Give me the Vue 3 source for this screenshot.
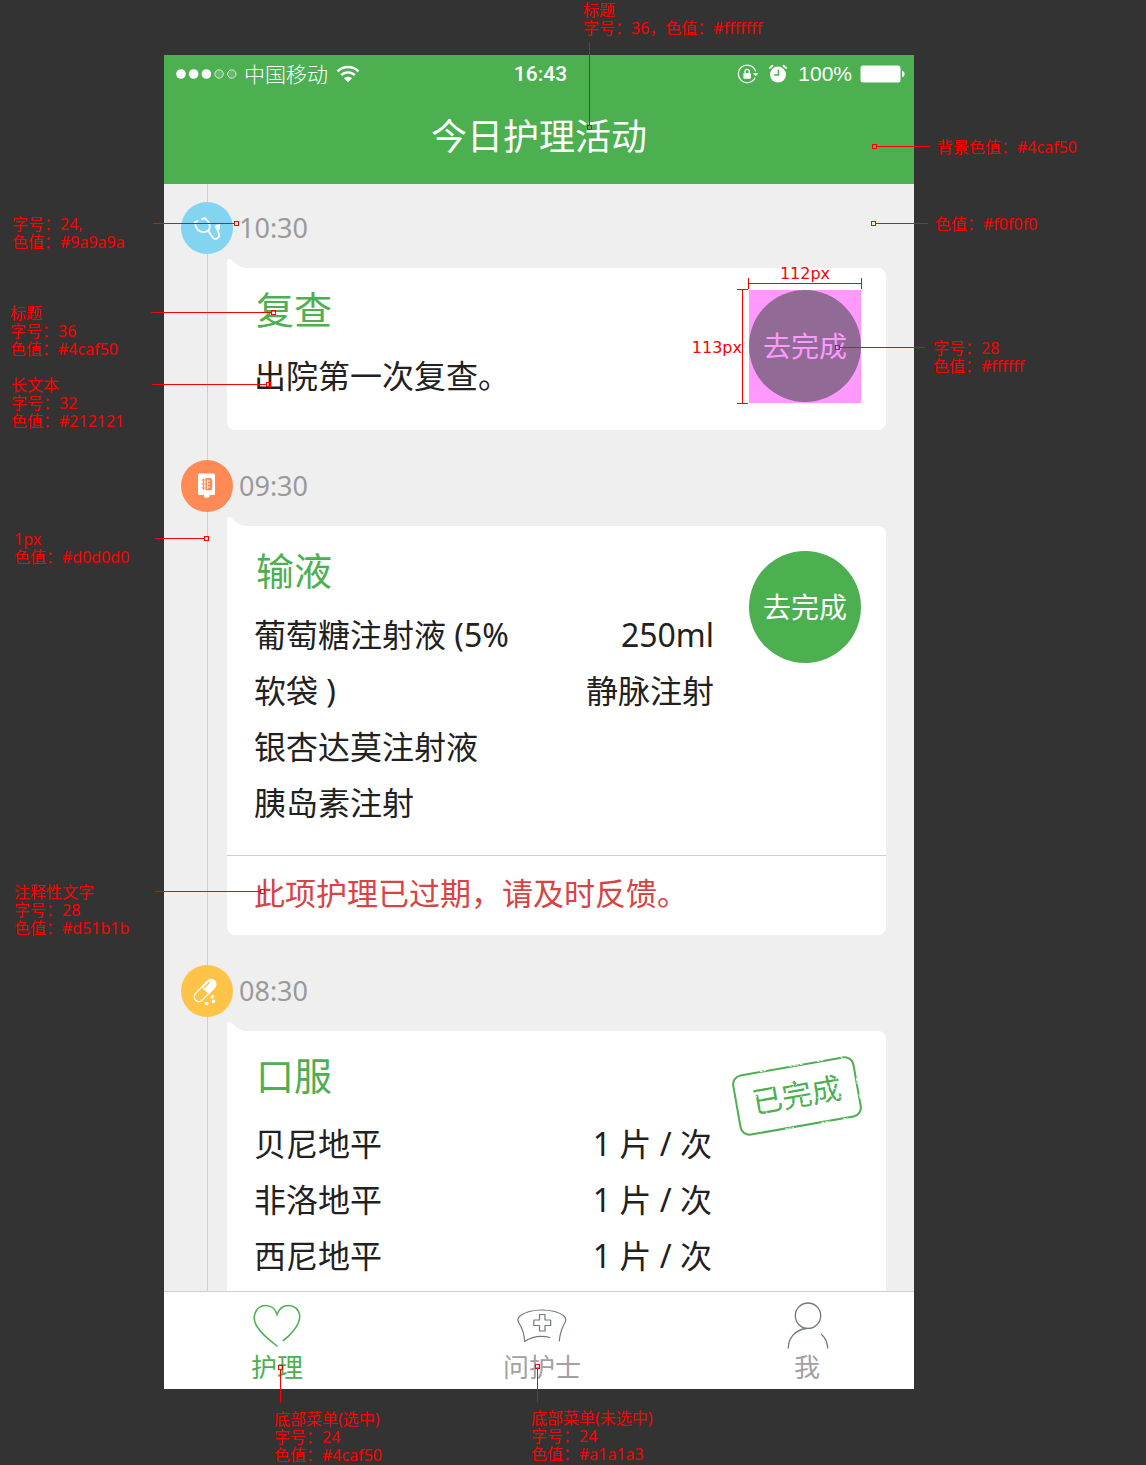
<script setup>
import { ref } from 'vue'

const activeTab = ref('care')

const tabs = [
  { id: 'care', label: '护理' },
  { id: 'nurse', label: '问护士' },
  { id: 'me', label: '我' },
]

const doses = [
  { name: '贝尼地平', dose: '1 片 / 次' },
  { name: '非洛地平', dose: '1 片 / 次' },
  { name: '西尼地平', dose: '1 片 / 次' },
]

// Spec notes, grouped by the edge of the phone they are anchored to.
// text: label position, line: leader [x, y, width, height], mark: target centre.
const noteGroups = [
  {
    anchor: 'start',
    notes: [
      { text: [-152, 160], lines: ['字号：24,', '色值：#9a9a9a'], line: [-11, 168, 81, 1], mark: [72, 168] },
      { text: [-154, 249], lines: ['标题', '字号：36', '色值：#4caf50'], line: [-13, 257, 120, 1], mark: [109, 257] },
      { text: [-153, 321], lines: ['长文本', '字号：32', '色值：#212121'], line: [-12, 329, 114, 1], mark: [104, 329] },
      { text: [-150, 475], lines: ['1px', '色值：#d0d0d0'], line: [-9, 483, 49, 1], mark: [42, 483] },
      { text: [-150, 828], lines: ['注释性文字', '字号：28', '色值：#d51b1b'], line: [-9, 836, 105, 1], mark: [98, 836] },
      { text: [110, 1355], lines: ['底部菜单(选中)', '字号：24', '色值：#4caf50'], line: [116, 1315, 1, 33], mark: [116, 1312] },
    ],
  },
  {
    anchor: 'middle',
    notes: [
      { text: [44, -54], lines: ['标题', '字号：36，色值：#fffffff'], line: [50, -13, 1, 83], mark: [50, 72] },
      { text: [-8, 1354], lines: ['底部菜单(未选中)', '字号：24', '色值：#a1a1a3'], line: [-2, 1314, 1, 33], mark: [-2, 1311] },
    ],
  },
  {
    anchor: 'end',
    notes: [
      { text: [23, 83], lines: ['背景色值：#4caf50'], line: [-38, 91, 54, 1], mark: [-40, 91] },
      { text: [21, 160], lines: ['色值：#f0f0f0'], line: [-39, 168, 53, 1], mark: [-41, 168] },
      { text: [19, 284], lines: ['字号：28', '色值：#ffffff'], line: [-75, 292, 86, 1], mark: [-77, 292] },
    ],
  },
]

const at = ([x, y]) => ({ left: `${x}px`, top: `${y}px` })
const box = ([x, y, w, h]) => ({ left: `${x}px`, top: `${y}px`, width: `${w}px`, height: `${h}px` })
const centred = ([x, y]) => at([x - 2, y - 2])
</script>

<template>
  <div class="board">
    <main class="phone">
      <header class="header">
        <div class="status">
          <div class="status-left">
            <svg class="signal" viewBox="0 0 62 12" aria-hidden="true">
              <g fill="#fff">
                <circle cx="5" cy="6" r="4.8" />
                <circle cx="17.7" cy="6" r="4.8" />
                <circle cx="30.4" cy="6" r="4.8" />
              </g>
              <g fill="#fff" fill-opacity=".15" stroke="#fff" stroke-opacity=".75">
                <circle cx="43.1" cy="6" r="4.2" />
                <circle cx="55.8" cy="6" r="4.2" />
              </g>
            </svg>
            <span class="carrier">中国移动</span>
            <svg class="wifi" viewBox="0 0 24 18" aria-hidden="true">
              <g fill="none" stroke="#fff" stroke-width="2.4">
                <path d="M1.5 6.4C7.2.5 16.8.5 22.5 6.4" />
                <path d="M5.2 10.2C9 6.4 15 6.4 18.8 10.2" />
              </g>
              <path d="M12 17.2L8 13.2C10.3 11.2 13.7 11.2 16 13.2Z" fill="#fff" />
            </svg>
          </div>
          <time class="clock">16:43</time>
          <div class="status-right">
            <svg class="lock" viewBox="0 0 22 20" aria-hidden="true">
              <path d="M18.2 13.5A8.8 8.8 0 1 1 18.600 7.400" fill="none" stroke="#fff" stroke-width="1.2" />
              <path d="M16 9.2H21.500L18.800 12.200Z" fill="#fff" />
              <rect x="6.4" y="9" width="7.400" height="5.800" rx=".8" fill="#fff" />
              <path d="M8 9V7.4A2.1 2.1 0 0 1 12.200 7.400V9" fill="none" stroke="#fff" stroke-width="1.3" />
            </svg>
            <svg class="alarm" viewBox="0 0 20 20" aria-hidden="true">
              <circle cx="10" cy="10.600" r="8" fill="#fff" />
              <path d="M1.800 4L4.500 1.800M18.200 4L15.500 1.800" stroke="#fff" stroke-width="1.800" stroke-linecap="round" />
              <path d="M10.400 5.800V11H6.200" fill="none" stroke="#4caf50" stroke-width="1.500" />
            </svg>
            <span class="percent">100%</span>
            <svg class="battery" viewBox="0 0 45 18" aria-hidden="true">
              <rect x=".5" y=".5" width="40" height="17" rx="2.500" fill="#fff" />
              <path d="M42 5.800C45.500 6.500 45.500 11.500 42 12.200Z" fill="#fff" />
            </svg>
          </div>
        </div>
        <h1 class="heading">今日护理活动</h1>
      </header>

      <section class="timeline">
        <article class="entry">
          <div class="entry-head">
            <span class="badge badge-blue">
              <svg viewBox="0 0 52 52" aria-hidden="true">
                <g fill="none" stroke="#fff" stroke-width="1.800" stroke-linecap="round" stroke-linejoin="round">
                  <path d="M16.600 19.200L14 20.200C14.300 26.500 18 30.300 22.800 30.300C27 30.300 29.500 27 28.600 23C27.800 20 25.800 17.500 23.700 16L21 17.200" />
                  <path d="M27.200 28.800L31 34.500C32.500 36.800 34 37.600 35.500 36.800L37.600 35.400C39.800 33.400 37 30.500 36.200 27" />
                </g>
                <circle cx="36.400" cy="24.800" r="2.300" fill="#fff" />
                <path d="M38.200 22V27.500" stroke="#fff" stroke-width="1.300" />
              </svg>
            </span>
            <time class="time">10:30</time>
          </div>
          <div class="card">
            <svg class="ear" viewBox="0 0 22 10" aria-hidden="true"><path d="M0 10V2C0-.3 3-.7 5 1.400C10 6.500 15 9 22 9V10Z" fill="#fff" /></svg>
            <div class="card-body card-body-short">
              <div class="content">
                <h2 class="title">复查</h2>
                <p class="summary">出院第一次复查。</p>
              </div>
              <div class="action action-measured">
                <button type="button" class="go">去完成</button>
                <span class="measure measure-width">112px</span>
                <span class="ruler ruler-width"></span>
                <span class="measure measure-height">113px</span>
                <span class="ruler ruler-height"></span>
              </div>
            </div>
          </div>
        </article>

        <article class="entry">
          <div class="entry-head">
            <span class="badge badge-orange">
              <svg viewBox="0 0 52 52" aria-hidden="true">
                <path d="M18.500 13.500H32.500Q34 13.500 34 15V33.500Q34 35 32.500 35H28.500V36.500Q28 37.800 25.700 37.800Q23.500 37.800 23 36.500V35H18.500Q17 35 17 33.500V15Q17 13.500 18.500 13.500Z" fill="#fff" />
                <path d="M24.500 18H29Q31.200 18 31.200 20V28Q31.200 30.200 29 30.200H24.500" fill="#ff8a55" />
                <path d="M26 21H29M26 24H29M26 27H29M26.500 19.500V29" stroke="#fff" stroke-width=".9" />
                <path d="M20.500 20H24.500M20.500 24H24.500M20.500 28H24.500M22.500 18.500V30" stroke="#ff8a55" stroke-width="1.200" />
              </svg>
            </span>
            <time class="time">09:30</time>
          </div>
          <div class="card">
            <svg class="ear" viewBox="0 0 22 10" aria-hidden="true"><path d="M0 10V2C0-.3 3-.7 5 1.400C10 6.500 15 9 22 9V10Z" fill="#fff" /></svg>
            <div class="card-body">
              <div class="content">
                <h2 class="title">输液</h2>
                <div class="infusion">
                  <ul>
                    <li>葡萄糖注射液 (5%<br />软袋 )</li>
                    <li>银杏达莫注射液</li>
                    <li>胰岛素注射</li>
                  </ul>
                  <p class="usage">250ml<br />静脉注射</p>
                </div>
              </div>
              <div class="action">
                <button type="button" class="go">去完成</button>
              </div>
            </div>
            <p class="overdue">此项护理已过期，请及时反馈。</p>
          </div>
        </article>

        <article class="entry">
          <div class="entry-head">
            <span class="badge badge-yellow">
              <svg viewBox="0 0 52 52" aria-hidden="true">
                <g transform="rotate(-46 24 25.500)">
                  <rect x="10.500" y="20.800" width="27" height="9.400" rx="4.700" fill="none" stroke="#fff" stroke-width="1.300" />
                  <path d="M24 20.200H32.500A5.300 5.300 0 0 1 32.500 30.800H24Z" fill="#fff" />
                  <path d="M25.500 23H33" stroke="#ffc348" stroke-width="1.300" stroke-linecap="round" />
                </g>
                <g fill="#fff">
                  <circle cx="31.300" cy="31.700" r="1.700" />
                  <circle cx="32.500" cy="36.400" r="1.800" />
                  <circle cx="25.700" cy="38.600" r="1.800" />
                </g>
              </svg>
            </span>
            <time class="time">08:30</time>
          </div>
          <div class="card card-open">
            <svg class="ear" viewBox="0 0 22 10" aria-hidden="true"><path d="M0 10V2C0-.3 3-.7 5 1.400C10 6.500 15 9 22 9V10Z" fill="#fff" /></svg>
            <div class="card-body card-body-open">
              <div class="content">
                <h2 class="title">口服</h2>
                <table class="doses">
                  <tbody>
                    <tr v-for="item in doses" :key="item.name">
                      <th scope="row">{{ item.name }}</th>
                      <td>{{ item.dose }}</td>
                    </tr>
                  </tbody>
                </table>
              </div>
              <div class="action">
                <div class="stamp">
                  已完成
                  <svg class="scratches" viewBox="0 0 124 62" aria-hidden="true">
                    <g fill="none" stroke="#fff" stroke-linecap="round">
                      <path d="M30 .5H37M60 .5H74M88 .5H94M112 1L120 6M123.500 24V30M123.500 40V44M45 61.500H53M82 61.500H90M104 61.500H108" stroke-width="1" stroke-dasharray="2 1.600" />
                      <path d="M18 26L40 19M20 39L44 31M49 24L72 17M48 36L73 41M53 45L71 27M80 22L105 32M79 38L104 21M83 45L106 39M24 20L30 45M90 16L98 44" stroke-width=".9" stroke-dasharray="1 2.600" />
                    </g>
                  </svg>
                </div>
              </div>
            </div>
          </div>
        </article>
      </section>

      <nav class="tabbar">
        <button
          v-for="tab in tabs"
          :key="tab.id"
          type="button"
          class="tab"
          :class="{ 'tab-active': tab.id === activeTab }"
          @click="activeTab = tab.id"
        >
          <svg viewBox="0 0 52 52" fill="none" stroke-linecap="round" aria-hidden="true">
            <path
              v-if="tab.id === 'care'"
              stroke-width="1.500"
              d="M26 46C18 40 10 33 6 26.500C3 22 2.800 17 4 13.500C6 8 10 5.500 14.500 5.500C20 5.500 24.500 9 26 14.500C28 9 32 5.500 37.500 5.500C43 5.500 48 9 48.700 15.500C49 20.500 47 25 43 30C39.500 34.500 36 38 32.300 40.700"
            />
            <g v-else-if="tab.id === 'nurse'" stroke-width="1.200">
              <path d="M34 37.500C26 35.500 16 36.500 8.700 41.500C8.300 33 6.500 28.500 2.700 22.500C1.500 20 2 17.500 4 16C14 8 38 8 48 16C50.200 18 50.300 20 49 22.500C45.500 28.500 44 32 43.300 41" />
              <path d="M23.500 14.500H29V20H34.700V25.500H29V31H23.500V25.500H17.800V20H23.500Z" stroke-linejoin="round" />
            </g>
            <g v-else stroke-width="1.300">
              <circle cx="27" cy="15.700" r="12.700" />
              <path d="M25 28.500C14 30 7.300 38 7.300 48M40.500 34.500C44.500 38 46.500 43 46.700 48" />
            </g>
          </svg>
          <span>{{ tab.label }}</span>
        </button>
      </nav>

      <aside v-for="group in noteGroups" :key="group.anchor" class="notes" :class="`notes-${group.anchor}`">
        <template v-for="note in group.notes" :key="note.text.join()">
          <p class="note" :style="at(note.text)">
            <span v-for="line in note.lines" :key="line">{{ line }}</span>
          </p>
          <i class="leader" :style="box(note.line)"></i>
          <i class="mark" :style="centred(note.mark)"></i>
        </template>
      </aside>
    </main>
  </div>
</template>

<style>
body {
  margin: 0;
  background: #333;
}
</style>

<style scoped>
.board {
  display: grid;
  grid-template-columns: 164px minmax(0, 1fr) 232px;
  padding: 55px 0 76px;
  overflow: hidden;
  background: #333;
  font-family: "Noto Sans", "Noto Sans CJK SC", sans-serif;
  font-weight: 400;
}

.phone {
  grid-column: 2;
  position: relative;
  color: #212121;
}

h1,
h2,
p,
ul {
  margin: 0;
  padding: 0;
  font-weight: inherit;
}

ul {
  list-style: none;
}

svg {
  display: block;
  flex: none;
}

button {
  padding: 0;
  border: 0;
  background: none;
  font: inherit;
  cursor: pointer;
}

/* Header */
.header {
  height: 129px;
  background: #4caf50;
  color: #fff;
}

.status {
  display: grid;
  grid-template-columns: 1fr auto 1fr;
  align-items: center;
  height: 38px;
  padding: 0 9px 0 12px;
}

.status-left,
.status-right {
  display: flex;
  align-items: center;
}

.status-right {
  justify-content: flex-end;
}

.signal {
  width: 62px;
  height: 12px;
}

.carrier {
  margin: 0 8px 0 6px;
  font-size: 21px;
  font-weight: 300;
  line-height: 38px;
}

.wifi {
  width: 24px;
  height: 18px;
}

.clock {
  font-family: Roboto, sans-serif;
  font-size: 21px;
  font-weight: 500;
}

.lock {
  width: 22px;
  height: 20px;
  margin-right: 9px;
}

.alarm {
  width: 20px;
  height: 20px;
  margin-right: 10px;
}

.percent {
  margin-right: 8px;
  font-family: "Liberation Sans", sans-serif;
  font-size: 21px;
}

.battery {
  width: 45px;
  height: 18px;
}

.heading {
  padding-top: 16px;
  font-size: 36px;
  line-height: 56px;
  text-align: center;
}

/* Timeline */
.timeline {
  display: flex;
  flex-direction: column;
  gap: 30px;
  padding: 18px 28px 0 17px;
  background: linear-gradient(#cfcfcf, #cfcfcf) 43px 0 / 1px 100% no-repeat #efefef;
}

.entry-head {
  display: flex;
  align-items: center;
  gap: 6px;
  margin-bottom: 14px;
}

.badge {
  width: 52px;
  height: 52px;
  border-radius: 50%;
}

.badge-blue {
  background: #82d4f0;
}

.badge-orange {
  background: #ff8a55;
}

.badge-yellow {
  background: #ffc348;
}

.time {
  color: #9a9a9a;
  font-size: 27px;
  line-height: 50px;
}

.card {
  position: relative;
  margin-left: 46px;
  border-radius: 0 8px 8px 8px;
  background: #fff;
}

.card-open {
  border-radius: 0 8px 0 0;
}

.ear {
  position: absolute;
  left: 0;
  top: -9px;
  width: 22px;
  height: 10px;
}

.card-body {
  display: flex;
  gap: 35px;
  padding: 25px 25px 24px 27px;
}

.card-body-short {
  padding-top: 22px;
  padding-bottom: 26px;
}

.card-body-open {
  padding-bottom: 7px;
}

.content {
  flex: 1;
  font-size: 32px;
  line-height: 56px;
}

.title {
  padding-left: 2px;
  color: #4caf50;
  font-size: 38px;
  line-height: 38px;
}

.summary {
  margin-top: 20px;
}

.infusion {
  display: flex;
  justify-content: space-between;
  margin-top: 18px;
}

.usage {
  text-align: right;
}

.doses {
  width: 100%;
  margin-top: 22px;
  border-collapse: collapse;
}

.doses th,
.doses td {
  padding: 0;
  font-weight: inherit;
  text-align: left;
}

.doses td {
  padding-right: 2px;
  text-align: right;
}

.overdue {
  padding: 0 27px 4px;
  border-top: 1px solid #cfcfcf;
  color: #d84343;
  font-size: 31px;
  line-height: 75px;
}

.action {
  position: relative;
  flex: none;
  width: 112px;
}

.go {
  display: block;
  width: 112px;
  height: 112px;
  border-radius: 50%;
  background: #4caf50;
  color: #fff;
  font-size: 28px;
  line-height: 112px;
}

.action-measured {
  height: 113px;
  background: #ff99ff;
}

.action-measured .go {
  background: #916a95;
  color: #ff99ff;
}

.measure {
  position: absolute;
  color: #f00;
  font-family: "DejaVu Sans", sans-serif;
  font-size: 16px;
  line-height: 18px;
}

.measure-width {
  left: 0;
  right: 0;
  top: -25px;
  text-align: center;
}

.measure-height {
  right: calc(100% + 7px);
  top: 49px;
}

.ruler {
  position: absolute;
  background: linear-gradient(#f00, #f00) center no-repeat;
}

.ruler-width {
  left: -1px;
  right: -1px;
  top: -12px;
  height: 11px;
  border: solid #f00;
  border-width: 0 1px;
  background-size: 100% 1px;
}

.ruler-height {
  left: -12px;
  top: -1px;
  bottom: -1px;
  width: 11px;
  border: solid #f00;
  border-width: 1px 0;
  background-size: 1px 100%;
}

.stamp {
  position: relative;
  box-sizing: border-box;
  width: 124px;
  height: 62px;
  margin: 9px 0 0 -14px;
  border: 2px solid #4caf50;
  border-radius: 10px;
  color: #4caf50;
  font-size: 30px;
  line-height: 56px;
  text-align: center;
  transform: rotate(-10deg);
}

.scratches {
  position: absolute;
  left: -2px;
  top: -2px;
  width: 124px;
  height: 62px;
}

/* Tab bar */
.tabbar {
  display: flex;
  justify-content: space-between;
  padding: 8px 67px 7px 73px;
  border-top: 1px solid #cfcfcf;
  background: #fff;
}

.tab {
  display: flex;
  flex-direction: column;
  align-items: center;
  width: 80px;
  color: #a1a1a3;
  font-size: 26px;
  line-height: 30px;
}

.tab svg {
  width: 52px;
  height: 52px;
  stroke: #717a77;
}

.tab-active {
  color: #4caf50;
}

.tab-active svg {
  stroke: #4caf50;
}

/* Spec notes over the phone */
.notes {
  position: absolute;
  top: 0;
  color: #f00;
  font-size: 16px;
  line-height: 18px;
  pointer-events: none;
}

.notes-start {
  left: 0;
}

.notes-middle {
  left: 50%;
}

.notes-end {
  left: 100%;
}

.note,
.leader,
.mark {
  position: absolute;
}

.note {
  white-space: nowrap;
}

.note span {
  display: block;
}

.leader {
  background: #f00;
}

.mark {
  box-sizing: border-box;
  width: 5px;
  height: 5px;
  border: 1px solid #f00;
}
</style>
